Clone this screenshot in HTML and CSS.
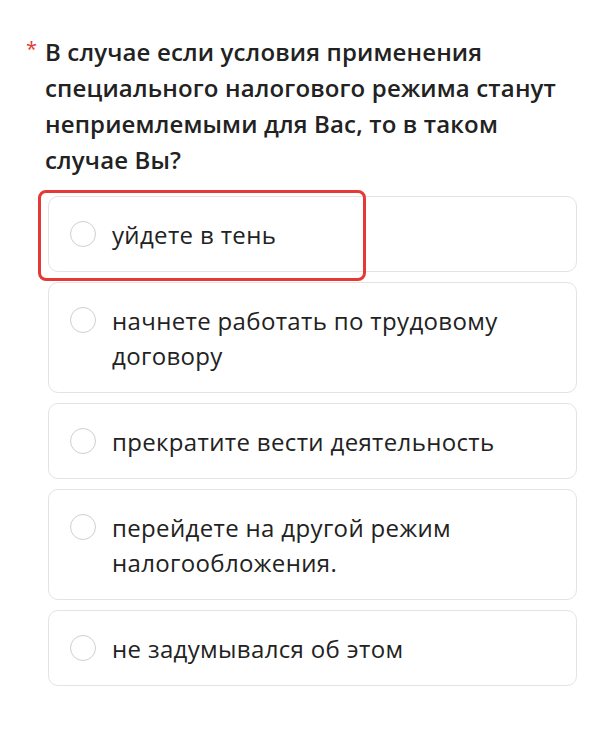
FILE: index.html
```html
<!DOCTYPE html>
<html lang="ru">
<head>
    <meta charset="UTF-8">
    <meta name="viewport" content="width=device-width, initial-scale=1.0">
    <title>Опрос</title>
    <link rel="stylesheet" href="styles.css">
</head>
<body>
    <div class="question">
        <div class="question-title">
            <span class="required">*</span>
            <h2>В случае если условия применения специального налогового режима станут неприемлемыми для Вас, то в таком случае Вы?</h2>
        </div>
        <div class="options">
            <label class="option">
                <span class="radio"></span>
                <span class="option-text">уйдете в тень</span>
                <span class="highlight"></span>
            </label>
            <label class="option">
                <span class="radio"></span>
                <span class="option-text">начнете работать по трудовому договору</span>
            </label>
            <label class="option">
                <span class="radio"></span>
                <span class="option-text">прекратите вести деятельность</span>
            </label>
            <label class="option">
                <span class="radio"></span>
                <span class="option-text">перейдете на другой режим налогообложения.</span>
            </label>
            <label class="option">
                <span class="radio"></span>
                <span class="option-text">не задумывался об этом</span>
            </label>
        </div>
    </div>
</body>
</html>
```

FILE: styles.css
```css
body {
    margin: 0;
    background-color: #fff;
    font-family: "Open Sans", "Noto Sans", sans-serif;
    color: #222;
}
.question {
    padding: 34px 36px 0 26px;
}
.question-title {
    display: flex;
    gap: 8px;
}
.required {
    color: #e53935;
    font-size: 20px;
    line-height: 30px;
}
.question-title h2 {
    margin: 0;
    font-size: 24px;
    font-weight: 600;
    line-height: 36px;
    letter-spacing: 0.15px;
}
.options {
    display: flex;
    flex-direction: column;
    gap: 10px;
    margin: 18px 0 0 22px;
}
.option {
    position: relative;
    display: flex;
    align-items: flex-start;
    gap: 16px;
    padding: 19.5px 20px 19.5px 21px;
    border: 1px solid #e3e3e3;
    border-radius: 10px;
}
.radio {
    flex: none;
    width: 24px;
    height: 24px;
    margin-top: 4.5px;
    border: 1.5px solid #cfcfcf;
    border-radius: 50%;
}
.option-text {
    font-size: 24px;
    line-height: 35px;
    letter-spacing: 0.35px;
}
.highlight {
    position: absolute;
    left: -11px;
    top: -7px;
    width: 322px;
    height: 85px;
    border: 3px solid #e53935;
    border-radius: 8px;
}
```
